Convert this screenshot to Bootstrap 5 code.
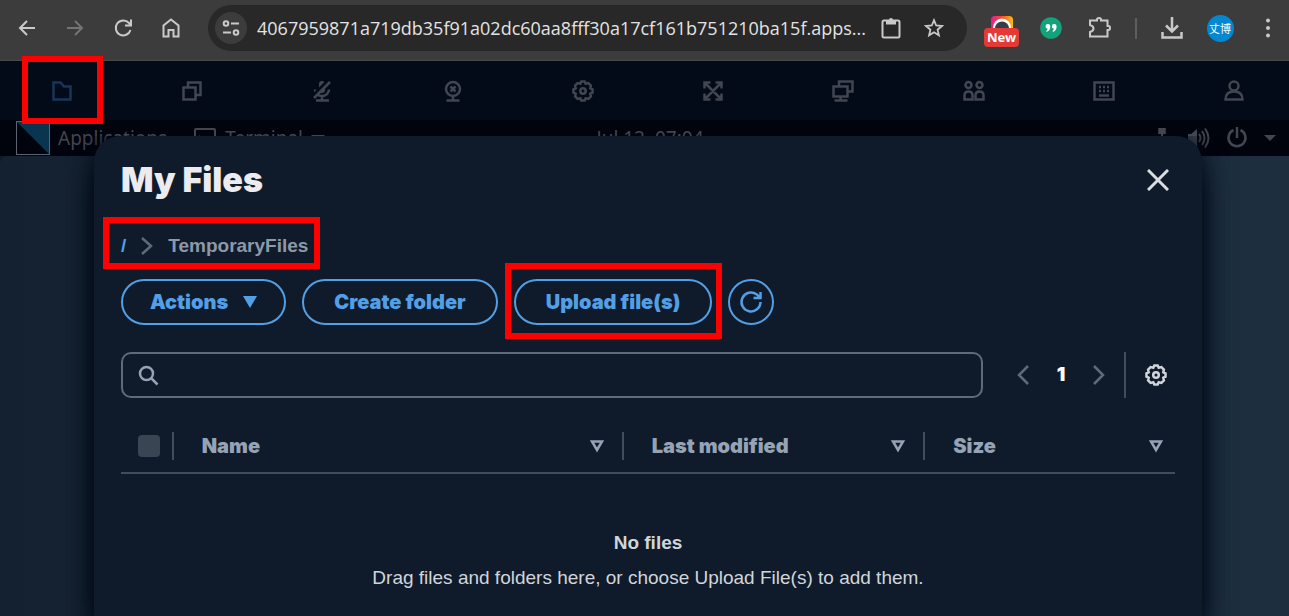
<!DOCTYPE html>
<html lang="en" data-bs-theme="dark">
<head>
<meta charset="utf-8">
<meta name="viewport" content="width=device-width, initial-scale=1">
<title>My Files</title>
<link href="https://cdn.jsdelivr.net/npm/bootstrap@5.3.0/dist/css/bootstrap.min.css" rel="stylesheet">
<style>
  :root { --panel:#0f1b2a; --link:#539fe5; --muted:#95a3b5; --line:#5f6b7a; --rule:#414d5c; }
  body { font-family:"Liberation Sans",Arial,sans-serif; background:var(--panel); color:#d1d5db; }
  svg { display:block; flex:none; fill:none; stroke:currentColor; stroke-width:2; }
  svg.flat { stroke:none; }
  svg.bold { stroke-width:3; }
  .heavy { font-family:Inter,"Liberation Sans",sans-serif; font-weight:900; }
  .plain-btn { background:none; border:0; padding:0; color:inherit; display:flex; align-items:center; justify-content:center; }

  /* browser bar */
  .chrome-bar { background:#3c3c3c; border-bottom:1px solid #4a4a4a; color:#c9c9c9; height:61px; padding:5px 1px 9px 3px; }
  .chrome-bar .plain-btn { width:48px; height:46px; flex:none; }
  .chrome-bar .kebab-btn { width:44px; padding-left:4px; }
  .chrome-bar .dim { color:#747474; }
  .omnibox { background:#282828; border-radius:23px; height:46px; margin:0 11px 0 13px; padding:0 12px 0 7px; min-width:0; }
  .omnibox .plain-btn { width:43px; }
  .omnibox .site-info { width:32px; height:32px; border-radius:50%; background:#3c3c3c; margin-right:10px; }
  .omnibox input { background:none; border:0; padding:0; outline:0; min-width:0; font:18px/26px "Open Sans",sans-serif; color:#e3e3e3; text-overflow:ellipsis; }
  .ext-group { gap:1px; }
  .chrome-sep { width:2px; height:21px; background:#5e5e5e; margin:0 11px; }
  .new-tag { background:#e53935; color:#fff; font:700 13px/19px "Noto Sans",sans-serif; width:35px; border-radius:4px; left:6px; top:23px; }
  .avatar { width:27px; height:27px; border-radius:50%; background:#0288d1; color:#fff; font:11px/27px "Noto Sans CJK SC",sans-serif; }

  /* session toolbar */
  .session-bar { background:#030b19; color:#414650; height:59px; padding:0 44px 0 51px; }
  .session-bar .plain-btn { width:22px; height:22px; }
  .session-bar .active { color:#17365a; }
  .session-bar svg { stroke-width:2.5; }
  .callout { position:absolute; border:6px solid #f00; pointer-events:none; z-index:5; }
  .callout-folder { inset:-24px -30px -22px -29px; }
  .callout-path { inset:-15px -12px -9px -18px; }
  .callout-upload { inset:-16px -10px -14px -9px; }

  /* remote desktop */
  .desk-bar { background:#01030d; color:#414650; height:36px; padding:0 13px 0 16px; font:19px/36px "Noto Sans",sans-serif; }
  .desk-side { flex:1 1 0; }
  .desk-logo { color:#5c6370; }
  .desk-logo rect { stroke-width:1; }
  .desk-stage { min-height:460px; }
  .wallpaper { position:absolute; inset:0; background:linear-gradient(90deg,#142130,#152433 12%,#1b2c3e 88%,#1d2f3f); border-radius:8px 0 0 0; }

  /* files dialog */
  .files-panel { position:absolute; inset:-20px 87px 0 94px; background:var(--panel); border-radius:26px 26px 0 0; box-shadow:0 0 24px #020a16, 0 30px 24px #020a16; clip-path:inset(0 -60px); padding:24px 27px 0; }
  .files-title { font-size:34px; line-height:40px; color:#ebebf0; margin:0; }
  .close-btn { width:34px; height:40px; color:#d9dde3; }
  .path { font-size:19px; line-height:28px; font-weight:700; margin:32px 0 19px; color:#8d99a8; }
  .path a { color:var(--link); text-decoration:none; }
  .path svg { color:var(--line); margin:0 15px; }
  .pill { border:2px solid var(--link); border-radius:23px; color:var(--link); height:46px; font-size:20px; line-height:28px; padding:0 30px; background:none; white-space:nowrap; }
  .pill-menu { padding:0 27px; }
  .pill svg { margin-left:15px; }
  .pill-round { width:46px; padding:0; }
  .pill-round svg { margin:0; }
  .finder { margin-top:27px; }
  .search-box { border:2px solid var(--line); border-radius:10px; height:46px; padding-left:15px; color:var(--muted); }
  .search-box input { background:none; border:0; outline:0; color:#d1d5db; font-size:19px; }
  .pager { margin-left:21px; color:var(--line); }
  .pager .plain-btn { width:38px; height:46px; font-size:19px; }
  .pager .prefs { color:#d1d5db; }
  .pager-sep { width:2px; background:var(--rule); margin:0 11px 0 6px; }
  .files-table { table-layout:fixed; width:100%; margin-top:21px; }
  .files-table th { height:54px; padding:0; border-bottom:2px solid var(--rule); color:var(--muted); font-size:20px; line-height:28px; }
  .files-table th > div { height:28px; border-right:2px solid var(--rule); padding:0 17px 0 28px; }
  .files-table th:last-child > div { border:0; padding-right:11px; }
  .files-table th:first-child > div { padding:0 0 0 17px; }
  .files-table th svg { stroke-width:2.5; }
  .pick { appearance:none; width:22px; height:22px; border-radius:4px; background:#3a4554; margin:0; }
  .files-table .empty-cell { padding-top:55px; font-size:19px; line-height:28px; }
  .empty-title { margin-bottom:7px; }
</style>
</head>
<body class="d-flex flex-column min-vh-100">
<header class="chrome-bar d-flex align-items-center">
  <button class="plain-btn" aria-label="Back"><svg width="18" height="18" viewBox="0 0 18 18"><path d="M17 9H2M9 2 2 9l7 7"/></svg></button>
  <button class="plain-btn dim" aria-label="Forward"><svg width="18" height="18" viewBox="0 0 18 18"><path d="M1 9h15M9 2l7 7-7 7"/></svg></button>
  <button class="plain-btn" aria-label="Reload"><svg width="20" height="20" viewBox="0 0 20 20"><path d="M17.500 12A7.500 7.500 0 1 1 16 5l1.500 2M18 1.500V7.500h-6"/></svg></button>
  <button class="plain-btn" aria-label="Home"><svg width="18" height="20" viewBox="0 0 18 20"><path d="M1.500 18.500V7.500L9 1.500l7.500 6v11h-5V12h-5v6.500z"/></svg></button>
  <div class="omnibox d-flex align-items-center flex-fill">
    <button class="plain-btn site-info" aria-label="Site information"><svg width="18" height="18" viewBox="0 0 18 18"><circle cx="4" cy="4.500" r="2.300"/><path d="M9 4.500h8M1 13.500h8"/><circle cx="14" cy="13.500" r="2.300"/></svg></button>
    <input class="flex-fill" aria-label="Address" value="4067959871a719db35f91a02dc60aa8fff30a17cf161b751210ba15f.apps...">
    <button class="plain-btn" aria-label="Clipboard"><svg width="20" height="22" viewBox="0 0 20 22"><rect x="1.500" y="3.500" width="17" height="17" rx="1.500"/><path d="M5 3h3a2 2 0 0 1 4 0h3v4.500H5z" fill="currentColor" stroke="none"/></svg></button>
    <button class="plain-btn" aria-label="Bookmark"><svg width="20" height="20" viewBox="0 0 20 20"><path stroke-width="1.800" d="m10 2.200 2.200 5.300 5.700.5-4.300 3.700 1.300 5.600-4.900-3-4.900 3 1.300-5.600L2.100 8l5.700-.5z"/></svg></button>
  </div>
  <div class="ext-group d-flex align-items-center">
    <button class="plain-btn position-relative" aria-label="Capture extension"><svg class="flat mb-2" width="22" height="16" viewBox="0 0 22 16"><defs><linearGradient id="cap"><stop stop-color="#e6199b"/><stop offset=".5" stop-color="#f4512c"/><stop offset="1" stop-color="#fbc012"/></linearGradient></defs><rect width="22" height="16" rx="4" fill="url(#cap)"/><circle cx="11" cy="11.500" r="9" fill="#fff"/><circle cx="11" cy="12.500" r="7" fill="#333e48"/></svg><span class="new-tag position-absolute text-center">New</span></button>
    <button class="plain-btn" aria-label="Quotes extension"><svg class="flat" width="22" height="22" viewBox="0 0 22 22"><circle cx="11" cy="11" r="10.800" fill="#12a37c"/><path fill="#fff" d="M5.500 9.500a2.400 2.400 0 1 1 4.800 0q0 4-3.600 5.500l-.5-1q1.300-.8 1.400-2.200-2.100-.2-2.100-2.300zM11.800 9.500a2.400 2.400 0 1 1 4.800 0q0 4-3.600 5.500l-.5-1q1.300-.8 1.400-2.200-2.100-.2-2.100-2.300z"/></svg></button>
    <button class="plain-btn" aria-label="Extensions"><svg width="24" height="24" viewBox="0 0 24 24"><path d="M2 4.500h7V3.500a2 1.500 0 0 1 4 0v1h6.500v5.500h1a1.500 2 0 0 1 0 4h-1v6.500H2v-4.500q3.500-1 3.500-3.500T2 9z"/></svg></button>
  </div>
  <div class="chrome-sep"></div>
  <button class="plain-btn" aria-label="Downloads"><svg width="22" height="22" viewBox="0 0 22 22"><path stroke-width="2.500" d="M11 0v14M5 8.500l6 6 6-6M1.500 15v5.500h19V15"/></svg></button>
  <button class="plain-btn" aria-label="Profile"><span class="avatar text-center">丈博</span></button>
  <button class="plain-btn kebab-btn" aria-label="Menu"><svg class="flat" width="6" height="20" viewBox="0 0 6 20"><g fill="currentColor"><circle cx="3" cy="2.500" r="2"/><circle cx="3" cy="10" r="2"/><circle cx="3" cy="17.500" r="2"/></g></svg></button>
</header>

<nav class="session-bar d-flex align-items-center justify-content-between" aria-label="Session">
  <button class="plain-btn active position-relative" aria-label="Files"><svg width="22" height="22" viewBox="0 0 22 22"><path d="M2.500 2.500h7l3.500 4h6.500v13h-17z"/></svg><span class="callout callout-folder"></span></button>
  <button class="plain-btn" aria-label="Windows"><svg width="22" height="22" viewBox="0 0 22 22"><path d="M2.500 7.500h12v12h-12zM7 7V2.500h12.500V15H15"/></svg></button>
  <button class="plain-btn" aria-label="Microphone off"><svg width="22" height="22" viewBox="0 0 22 22"><rect x="8" y="1" width="6" height="12" rx="3" fill="currentColor" stroke="none"/><path d="M4 9.500a7 6.500 0 0 0 14 0M11 16v4M5 20.500h13"/><path stroke="#030b19" stroke-width="3" d="M1 16.500 17 .5"/><path d="M3 18 19 2"/></svg></button>
  <button class="plain-btn" aria-label="Webcam off"><svg width="22" height="22" viewBox="0 0 22 22"><circle cx="11" cy="9" r="7"/><path d="M8.500 6.500l5 5M13.500 6.500l-5 5M11 16v4M4.500 20.500h13"/></svg></button>
  <button class="plain-btn" aria-label="Settings"><svg width="22" height="22" viewBox="0 0 22 22"><path d="M8.300 3.700 9.300 1.500h3.400l1 2.200 2.700-.6 2.500 2.500-.6 2.700 2.200 1v3.400l-2.200 1 .6 2.700-2.500 2.500-2.700-.6-1 2.200H9.300l-1-2.200-2.700.6-2.500-2.500.6-2.700-2.200-1V9.300l2.200-1-.6-2.700 2.500-2.500z"/><circle cx="11" cy="11" r="2.700"/></svg></button>
  <button class="plain-btn" aria-label="Fullscreen"><svg width="22" height="22" viewBox="0 0 22 22"><path d="M3 3l16 16M19 3 3 19M2.500 8.500v-6h6M13.500 2.500h6v6M19.500 13.500v6h-6M8.500 19.500h-6v-6"/></svg></button>
  <button class="plain-btn" aria-label="Displays"><svg width="22" height="22" viewBox="0 0 22 22"><path d="M1.500 6.500h14v10h-14zM7 6V1.500h13.500v10H16M8.500 17v3M2.500 20.500h13"/></svg></button>
  <button class="plain-btn" aria-label="Collaborators"><svg width="22" height="22" viewBox="0 0 22 22"><circle cx="5.500" cy="5" r="3"/><circle cx="16.500" cy="5" r="3"/><path d="M1.500 19.500v-4q0-4 4-4t4 4v4zM12.500 19.500v-4q0-4 4-4t4 4v4z"/></svg></button>
  <button class="plain-btn" aria-label="Keyboard"><svg width="22" height="22" viewBox="0 0 22 22"><path d="M1.500 2.500h19v17h-19zM6 7h2m2 0h2m2 0h2M6 11h2m2 0h2m2 0h2M6 15.500h10"/></svg></button>
  <button class="plain-btn" aria-label="User"><svg width="22" height="22" viewBox="0 0 22 22"><circle cx="11" cy="6" r="4.500"/><path d="M2.500 19.500q0-8 8.500-8t8.500 8z"/></svg></button>
</nav>

<main class="d-flex flex-column flex-fill">
  <div class="desk-bar d-flex align-items-center">
    <div class="desk-side d-flex align-items-center">
      <svg class="desk-logo me-2" width="34" height="34" viewBox="0 0 34 34"><path d="M1 1h32v32z" fill="#0a3550" stroke="none"/><rect x=".5" y=".5" width="33" height="33"/></svg>
      <span>Applications</span>
      <svg class="ms-4 me-2" width="26" height="24" viewBox="0 0 26 24"><rect x="4" y="3" width="20" height="17" rx="1"/><path d="m8 10 4 3-4 3"/></svg>
      <span>Terminal</span>
      <svg class="flat ms-2" width="14" height="8" viewBox="0 0 14 8"><path fill="currentColor" d="M0 1h14L7 8z"/></svg>
    </div>
    <span class="ms-2">Jul 12, 07:04</span>
    <div class="desk-side d-flex align-items-center justify-content-end gap-3">
      <svg width="22" height="22" viewBox="0 0 22 22"><path d="M9.500 2h5v4h-5zM12 7v6M5 14h13v5H5z"/><path fill="currentColor" d="M9.500 2h5v4h-5z"/></svg>
      <svg width="22" height="22" viewBox="0 0 22 22"><path fill="currentColor" stroke="none" d="M0 7h3l6-5v18l-6-5H0z"/><path d="M11 7q3 4 0 8M14 4q5 7 0 14M17 1.500q7 9.500 0 19"/></svg>
      <svg width="22" height="22" viewBox="0 0 22 22"><path stroke-width="2.500" d="M7.500 3a8.500 8.500 0 1 0 7 0M11 0v11"/></svg>
      <svg class="flat" width="12" height="8" viewBox="0 0 12 8"><path fill="currentColor" d="M0 1h12L6 7z"/></svg>
    </div>
  </div>

  <div class="desk-stage position-relative flex-fill">
    <div class="wallpaper"></div>
    <section class="files-panel" role="dialog" aria-labelledby="filesTitle">
      <div class="d-flex justify-content-between align-items-center">
        <h1 class="files-title heavy" id="filesTitle">My Files</h1>
        <button class="plain-btn close-btn" aria-label="Close"><svg class="bold" width="22" height="22" viewBox="0 0 22 22"><path d="m1 1 20 20M21 1 1 21"/></svg></button>
      </div>
      <nav class="path d-flex" aria-label="Path">
        <div class="d-flex align-items-center position-relative">
          <a href="#">/</a>
          <svg width="12" height="20" viewBox="0 0 12 20"><path stroke-width="2.500" d="m1 2 9 8-9 8"/></svg>
          <span>TemporaryFiles</span>
          <span class="callout callout-path"></span>
        </div>
      </nav>
      <div class="d-flex gap-3">
        <button class="pill pill-menu heavy d-flex align-items-center">Actions<svg class="flat" width="14" height="12" viewBox="0 0 14 12"><path fill="currentColor" d="M0 0h14L7 12z"/></svg></button>
        <button class="pill heavy">Create folder</button>
        <div class="position-relative"><button class="pill heavy">Upload file(s)</button><span class="callout callout-upload"></span></div>
        <button class="pill pill-round d-flex align-items-center justify-content-center" aria-label="Refresh"><svg width="24" height="24" viewBox="0 0 24 24"><path stroke-width="2.500" d="M21.500 12a9.500 9.500 0 1 1-4-7.800L21 7.500M21.500 2v6h-7"/></svg></button>
      </div>
      <div class="finder d-flex">
        <label class="search-box d-flex align-items-center flex-fill">
          <svg width="21" height="21" viewBox="0 0 21 21"><circle cx="8.500" cy="8.500" r="6.500" stroke-width="2.500"/><path stroke-width="2.500" d="m13.500 13.500 6 6"/></svg>
          <input class="flex-fill ms-2" type="search" aria-label="Search files">
        </label>
        <div class="pager d-flex">
          <button class="plain-btn" aria-label="Previous page"><svg width="12" height="20" viewBox="0 0 12 20"><path stroke-width="2.500" d="m11 1-9 9 9 9"/></svg></button>
          <button class="plain-btn heavy text-white">1</button>
          <button class="plain-btn" aria-label="Next page"><svg width="12" height="20" viewBox="0 0 12 20"><path stroke-width="2.500" d="m1 1 9 9-9 9"/></svg></button>
          <div class="pager-sep"></div>
          <button class="plain-btn prefs" aria-label="Preferences"><svg width="22" height="22" viewBox="0 0 22 22"><path stroke-width="2.500" d="M8.300 3.700 9.300 1.500h3.400l1 2.200 2.700-.6 2.500 2.500-.6 2.700 2.200 1v3.400l-2.200 1 .6 2.700-2.500 2.500-2.700-.6-1 2.200H9.300l-1-2.200-2.700.6-2.500-2.500.6-2.700-2.200-1V9.300l2.200-1-.6-2.700 2.500-2.500z"/><circle cx="11" cy="11" r="2.800" stroke-width="2.500"/></svg></button>
        </div>
      </div>
      <table class="files-table">
        <colgroup><col style="width:5%"><col style="width:42.700%"><col style="width:28.600%"><col></colgroup>
        <thead><tr>
          <th><div class="d-flex align-items-center"><input class="pick" type="checkbox" aria-label="Select all files"></div></th>
          <th class="heavy"><div class="d-flex align-items-center justify-content-between">Name<svg width="16" height="14" viewBox="0 0 16 14"><path d="M3 2.500h10L8 11z"/></svg></div></th>
          <th class="heavy"><div class="d-flex align-items-center justify-content-between">Last modified<svg width="16" height="14" viewBox="0 0 16 14"><path d="M3 2.500h10L8 11z"/></svg></div></th>
          <th class="heavy"><div class="d-flex align-items-center justify-content-between">Size<svg width="16" height="14" viewBox="0 0 16 14"><path d="M3 2.500h10L8 11z"/></svg></div></th>
        </tr></thead>
        <tbody><tr><td colspan="4" class="empty-cell text-center"><div class="empty-title fw-bold">No files</div><div>Drag files and folders here, or choose Upload File(s) to add them.</div></td></tr></tbody>
      </table>
    </section>
  </div>
</main>
<script src="https://cdn.jsdelivr.net/npm/bootstrap@5.3.0/dist/js/bootstrap.bundle.min.js"></script>
</body>
</html>
